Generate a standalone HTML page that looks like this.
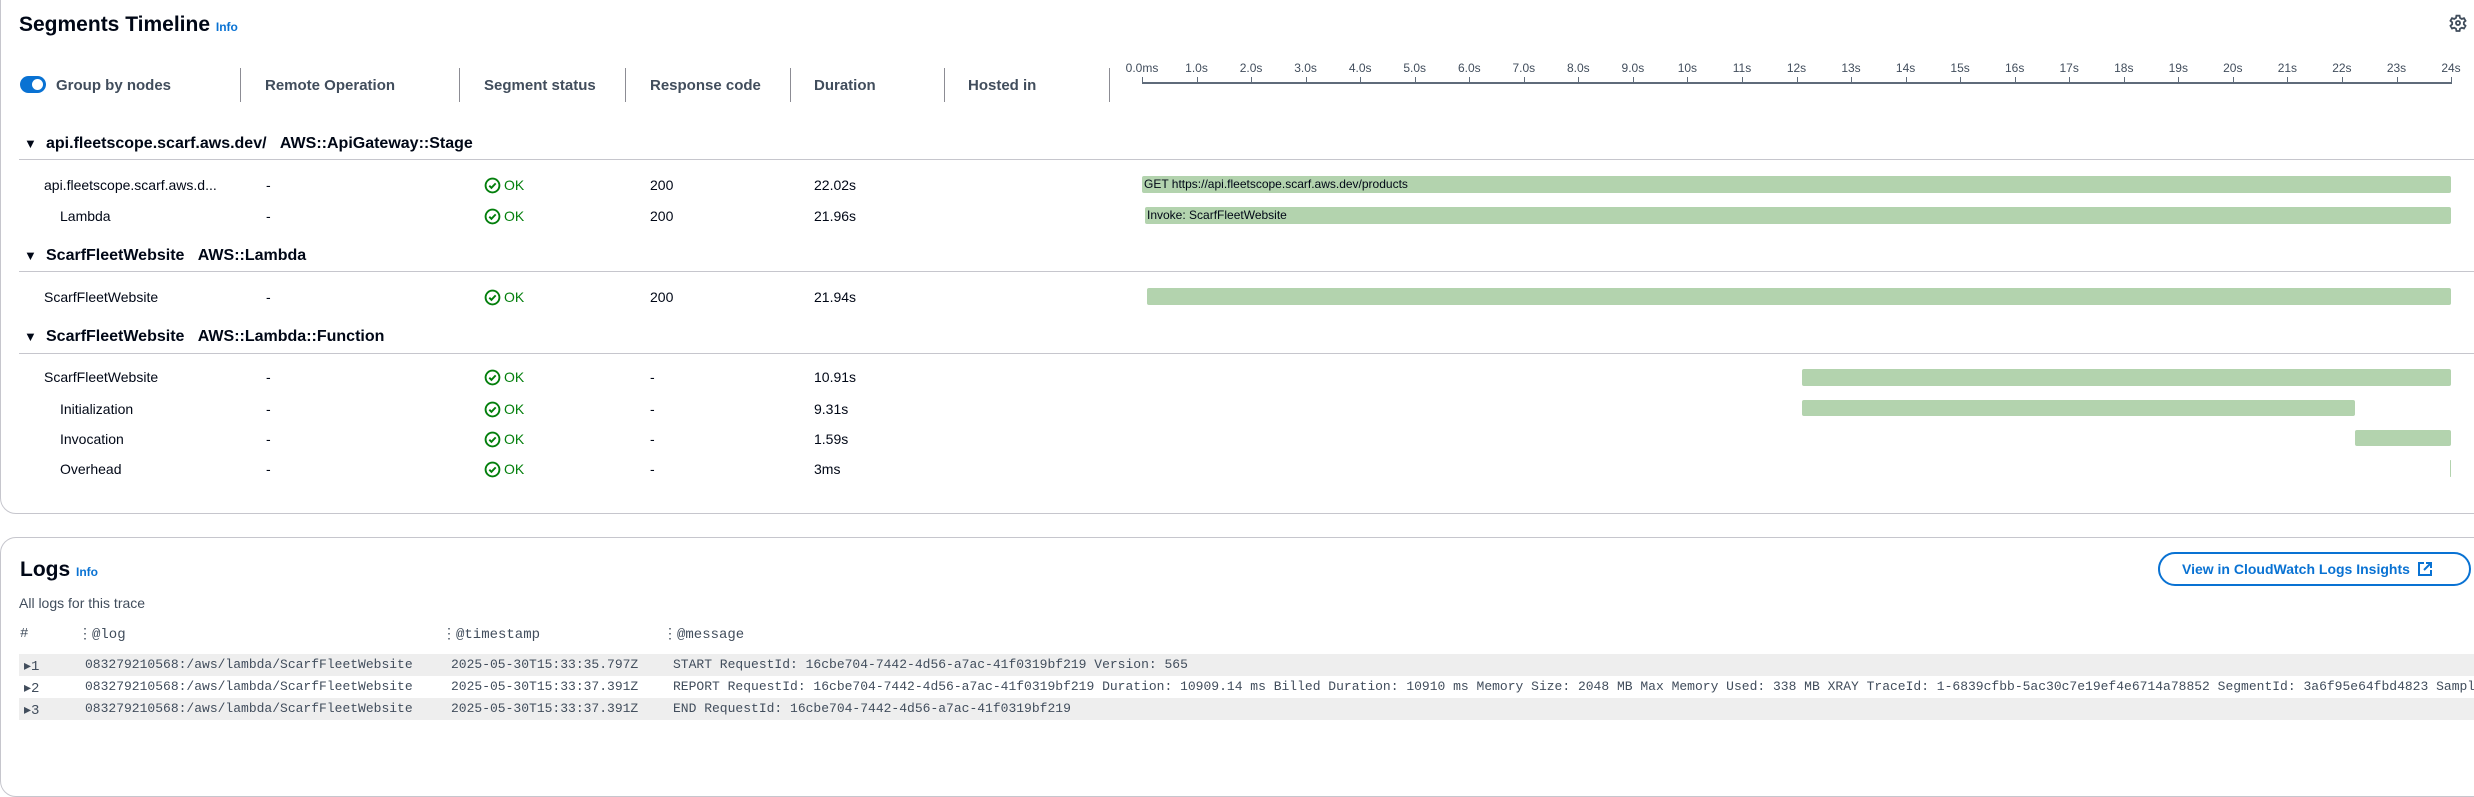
<!DOCTYPE html>
<html><head><meta charset="utf-8"><style>
*{margin:0;padding:0;box-sizing:border-box}
body{width:2474px;height:755px;overflow:hidden;background:#fff;font-family:"Liberation Sans",Arial,sans-serif;color:#000716;position:relative}
.a{position:absolute;white-space:nowrap}
.t{font-size:14px;line-height:18px;transform:translateY(-9px)}
.hd{font-size:15px;font-weight:bold;color:#414d5c;line-height:18px;top:77px}
.sep{position:absolute;top:68px;width:1px;height:34px;background:#8c8c94}
.gh{font-size:16px;font-weight:bold;line-height:20px;transform:translateY(-10px)}
.tri{font-size:13px;line-height:20px;transform:translateY(-10px)}
.ln{position:absolute;left:19px;right:0;height:1px;background:#c6c6cd}
.ok{color:#037f0c;font-size:14px;line-height:18px;transform:translateY(-9px);display:flex;align-items:center;gap:3px}
.bar{position:absolute;background:#b3d3ae;border-radius:2px;font-size:12px;line-height:17px;color:#000716;padding-left:2px;overflow:hidden;white-space:nowrap}
.tick{position:absolute;top:77px;width:1px;height:6px;background:#5f6b7a}
.tl{position:absolute;top:61px;font-size:12px;color:#414d5c;transform:translateX(-50%)}
.mono{font-family:"Liberation Mono",monospace;font-size:13px;color:#414d5c}
.lr{position:absolute;left:19px;right:0;height:22px}
</style></head><body>
<div style="position:absolute;left:0;top:-30px;width:2500px;height:544px;border:1px solid #c6c6cd;border-radius:16px"></div>
<div style="position:absolute;left:0;top:537px;width:2500px;height:260px;border:1px solid #c6c6cd;border-radius:16px"></div>

<div class="a" style="left:19px;top:12px;font-size:21px;font-weight:bold;line-height:26px">Segments Timeline <span style="font-size:12px;color:#0972d3">Info</span></div>
<svg class="a" style="left:2449px;top:14px" width="18" height="18" viewBox="0 0 16 16" fill="none" stroke="#414d5c" stroke-width="1.6"><path d="M6.6 1.5h2.8l.4 2 1.6.9 1.9-.7 1.4 2.4-1.5 1.3v1.8l1.5 1.3-1.4 2.4-1.9-.7-1.6.9-.4 2H6.6l-.4-2-1.6-.9-1.9.7-1.4-2.4 1.5-1.3V7.4L1.3 6.1l1.4-2.4 1.9.7 1.6-.9z"/><circle cx="8" cy="8" r="1.8"/></svg>

<div class="a" style="left:20px;top:76px;width:26px;height:17px;border-radius:9px;background:#0972d3"><div style="position:absolute;right:3px;top:3px;width:11px;height:11px;border-radius:50%;background:#fff"></div></div>
<div class="a hd" style="left:56px">Group by nodes</div>
<div class="sep" style="left:240px"></div><div class="a hd" style="left:265px">Remote Operation</div>
<div class="sep" style="left:459px"></div><div class="a hd" style="left:484px">Segment status</div>
<div class="sep" style="left:625px"></div><div class="a hd" style="left:650px">Response code</div>
<div class="sep" style="left:790px"></div><div class="a hd" style="left:814px">Duration</div>
<div class="sep" style="left:944px"></div><div class="a hd" style="left:968px">Hosted in</div>
<div class="sep" style="left:1109px"></div>

<div style="position:absolute;left:1142px;top:82px;width:1310px;height:2px;background:#5f6b7a"></div>
<div id="ax"></div>

<div class="a tri" style="left:24px;top:144px">▼</div><div class="a gh" style="left:46px;top:144px">api.fleetscope.scarf.aws.dev/&nbsp;&nbsp;&nbsp;AWS::ApiGateway::Stage</div>
<div class="ln" style="top:159px"></div>
<div class="a tri" style="left:24px;top:256px">▼</div><div class="a gh" style="left:46px;top:256px">ScarfFleetWebsite&nbsp;&nbsp;&nbsp;AWS::Lambda</div>
<div class="ln" style="top:271px"></div>
<div class="a tri" style="left:24px;top:337px">▼</div><div class="a gh" style="left:46px;top:337px">ScarfFleetWebsite&nbsp;&nbsp;&nbsp;AWS::Lambda::Function</div>
<div class="ln" style="top:353px"></div>

<div id="rows"></div>

<div class="bar" style="left:1142px;top:176px;width:1309px;height:17px">GET https://api.fleetscope.scarf.aws.dev/products</div>
<div class="bar" style="left:1145px;top:207px;width:1306px;height:17px">Invoke: ScarfFleetWebsite</div>
<div class="bar" style="left:1147px;top:288px;width:1304px;height:17px"></div>
<div class="bar" style="left:1802px;top:369px;width:649px;height:17px"></div>
<div class="bar" style="left:1802px;top:400px;width:553px;height:16px"></div>
<div class="bar" style="left:2355px;top:430px;width:96px;height:16px"></div>
<div class="bar" style="left:2450px;top:460px;width:1px;height:17px;padding:0"></div>

<div class="a" style="left:20px;top:557px;font-size:21px;font-weight:bold;line-height:26px">Logs <span style="font-size:12px;color:#0972d3">Info</span></div>
<div class="a" style="left:19px;top:594px;font-size:14px;line-height:18px;color:#414d5c">All logs for this trace</div>
<div class="a" style="left:2158px;top:552px;width:313px;height:34px;border:2px solid #0972d3;border-radius:17px;color:#0972d3;font-weight:bold;font-size:14px;line-height:30px;padding-left:22px">View in CloudWatch Logs Insights <svg style="vertical-align:-2px;margin-left:4px" width="14" height="14" viewBox="0 0 14 14" fill="none" stroke="#0972d3" stroke-width="2"><path d="M6 1H1v12h12V8M8 1h5v5M13 1 6 8"/></svg></div>

<div class="a mono" style="left:20px;top:626px;font-size:14px">#</div>
<div class="a mono" style="left:78px;top:626px;font-size:14px">⋮@log</div>
<div class="a mono" style="left:442px;top:626px;font-size:14px">⋮@timestamp</div>
<div class="a mono" style="left:663px;top:626px;font-size:14px">⋮@message</div>

<div class="lr" style="top:654px;background:#eeeeee"></div>
<div class="lr" style="top:698px;background:#eeeeee"></div>
<div id="logs"></div>

<script>
var ax=document.getElementById('ax'),h='';
for(var i=0;i<=24;i++){var x=1142+i*1309/24;var l=i==0?'0.0ms':(i<10?i+'.0s':i+'s');
h+='<div class="tick" style="left:'+x.toFixed(1)+'px"></div><div class="tl" style="left:'+x.toFixed(1)+'px">'+l+'</div>';}
ax.innerHTML=h;
var okI='<svg width="17" height="17" viewBox="0 0 16 16" fill="none" stroke="#037f0c" stroke-width="1.8"><circle cx="8" cy="8" r="6.5"/><path d="M5 8.2l2 2 4-4.2"/></svg>OK';
var R=[['api.fleetscope.scarf.aws.d...',44,185,'200','22.02s'],['Lambda',60,216,'200','21.96s'],['ScarfFleetWebsite',44,297,'200','21.94s'],['ScarfFleetWebsite',44,377,'-','10.91s'],['Initialization',60,409,'-','9.31s'],['Invocation',60,439,'-','1.59s'],['Overhead',60,469,'-','3ms']];
h='';R.forEach(function(r){h+='<div class="a t" style="left:'+r[1]+'px;top:'+r[2]+'px">'+r[0]+'</div><div class="a t" style="left:266px;top:'+r[2]+'px">-</div><div class="a ok" style="left:484px;top:'+r[2]+'px">'+okI+'</div><div class="a t" style="left:650px;top:'+r[2]+'px">'+r[3]+'</div><div class="a t" style="left:814px;top:'+r[2]+'px">'+r[4]+'</div>';});
document.getElementById('rows').innerHTML=h;
var L=[['2025-05-30T15:33:35.797Z','START RequestId: 16cbe704-7442-4d56-a7ac-41f0319bf219 Version: 565'],['2025-05-30T15:33:37.391Z','REPORT RequestId: 16cbe704-7442-4d56-a7ac-41f0319bf219 Duration: 10909.14 ms Billed Duration: 10910 ms Memory Size: 2048 MB Max Memory Used: 338 MB XRAY TraceId: 1-6839cfbb-5ac30c7e19ef4e6714a78852 SegmentId: 3a6f95e64fbd4823 Sampled: true'],['2025-05-30T15:33:37.391Z','END RequestId: 16cbe704-7442-4d56-a7ac-41f0319bf219']];
h='';L.forEach(function(r,i){var y=657+i*22;h+='<div class="a mono" style="left:24px;top:'+(y+1)+'px;font-size:14px">▸'+(i+1)+'</div><div class="a mono" style="left:85px;top:'+y+'px">083279210568:/aws/lambda/ScarfFleetWebsite</div><div class="a mono" style="left:451px;top:'+y+'px">'+r[0]+'</div><div class="a mono" style="left:673px;top:'+y+'px">'+r[1]+'</div>';});
document.getElementById('logs').innerHTML=h;
</script>
</body></html>
